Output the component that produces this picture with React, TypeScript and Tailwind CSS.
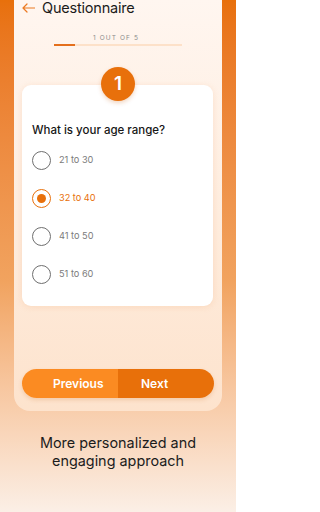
const options = ["21 to 30", "32 to 40", "41 to 50", "51 to 60"];

export default function App() {
  const selected = 1;
  return (
    <div
      className="w-[236px] h-[512px] overflow-hidden bg-gradient-to-b from-[#e8700b] via-[#f1a35f] via-55% to-[#fbefe6] flex flex-col"
      style={{ fontFamily: "Inter, 'Noto Sans', sans-serif" }}
    >
      {/* phone frame */}
      <div className="ml-[14px] w-[208px] h-[411px] shrink-0 rounded-b-[16px] bg-gradient-to-b from-[#fff6f0] to-[#fde3cd] flex flex-col">
        {/* header */}
        <div className="h-[15px] flex items-center pl-[8px] gap-[7px]">
          <svg width="13" height="10" viewBox="0 0 13 10" fill="none" stroke="#ec7a22" strokeWidth="1.2" strokeLinecap="round" strokeLinejoin="round">
            <path d="M12.5 5H1M5 1L1 5l4 4" />
          </svg>
          <span className="text-[14.5px] leading-[16px] tracking-[-0.2px] text-[#1b1b1b]">Questionnaire</span>
        </div>

        {/* progress */}
        <div className="mt-[19px] pr-[4px] text-center text-[6.5px] leading-[8px] tracking-[1.1px] text-[#8c8c8c]">1 OUT OF 5</div>
        <div className="mt-[2px] mx-auto w-[128px] h-[2px] bg-[#fde1c9] flex">
          <div className="w-[21px] h-full bg-[#e46f1c]" />
        </div>

        {/* number badge */}
        <div className="relative z-10 mt-[21px] mx-auto w-[34px] h-[34px] rounded-full bg-[#e8700b] flex items-center justify-center text-white text-[19px] font-semibold shadow-[0_2px_4px_rgba(200,90,10,0.25)]">
          1
        </div>

        {/* card */}
        <div className="mt-[-16px] ml-[8px] w-[191px] h-[221px] bg-white rounded-[9px] shadow-[0_1px_6px_rgba(240,150,80,0.18)] pt-[37px] pl-[10px]">
          <div className="text-[11.5px] leading-[16px] font-medium text-[#161616]">What is your age range?</div>
          <div className="mt-[12px] flex flex-col gap-[18px]">
            {options.map((o, i) => (
              <div key={o} className="h-[20px] flex items-center gap-[8px]">
                {i === selected ? (
                  <div className="w-[19px] h-[19px] rounded-full border-[1.5px] border-[#e8700b] flex items-center justify-center">
                    <div className="w-[9px] h-[9px] rounded-full bg-[#e8700b]" />
                  </div>
                ) : (
                  <div className="w-[19px] h-[19px] rounded-full border-[1.5px] border-[#6f6f6f]" />
                )}
                <span className={`text-[9.2px] ${i === selected ? "text-[#e8700b]" : "text-[#7b7b7b]"}`}>{o}</span>
              </div>
            ))}
          </div>
        </div>

        {/* buttons */}
        <div className="mt-[63px] ml-[8px] w-[192px] h-[29px] rounded-full overflow-hidden flex shadow-[0_2px_4px_rgba(200,100,20,0.2)]">
          <div className="w-[96px] h-full bg-[#fb8b22] flex items-center pl-[31px] text-white text-[12px] font-semibold">Previous</div>
          <div className="flex-1 h-full bg-[#e8700a] flex items-center pl-[23px] text-white text-[12px] font-semibold">Next</div>
        </div>
      </div>

      {/* tagline */}
      <div className="mt-[23px] text-center text-[14.4px] leading-[18px] text-[#1c1c1c]">
        More personalized and
        <br />
        engaging approach
      </div>
    </div>
  );
}
